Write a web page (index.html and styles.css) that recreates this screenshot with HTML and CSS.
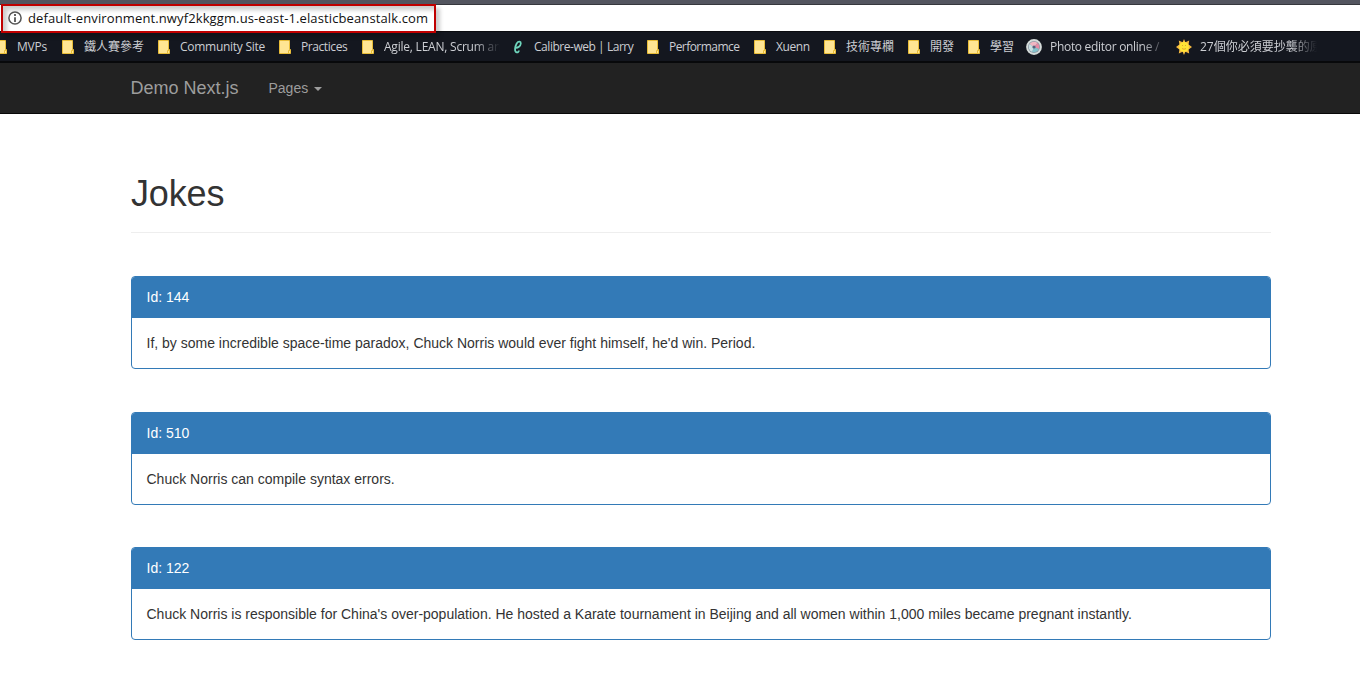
FILE: index.html
```html
<!DOCTYPE html>
<html lang="en">
<head>
<meta charset="utf-8">
<title>Demo Next.js</title>
<link rel="stylesheet" href="styles.css">
</head>
<body>
<svg class="defs" width="0" height="0">
  <symbol id="folder" viewBox="0 0 12 14"><path d="M.5.5h10v9h1v4H.5z" fill="#ffe593" stroke="#e9bd38"/><path d="M9.5 13V10.500h1.500" fill="none" stroke="#e9bd38"/></symbol>
</svg>
<div class="strip"></div>
<div class="address">
  <div class="address-box">
    <svg class="info" viewBox="0 0 14 14"><circle cx="7" cy="7" r="6.100" fill="none" stroke="#555" stroke-width="1.500"/><path d="M7 3v2M7 6.200v4.800" stroke="#555" stroke-width="1.800"/></svg>
    <span class="url">default-environment.nwyf2kkggm.us-east-1.elasticbeanstalk.com</span>
  </div>
</div>
<div class="bookmarks">
  <div class="bm"><svg class="folder"><use href="#folder"/></svg><span class="t-mvps">MVPs</span></div>
  <div class="bm"><svg class="folder"><use href="#folder"/></svg><span>鐵人賽參考</span></div>
  <div class="bm"><svg class="folder"><use href="#folder"/></svg><span class="t-community">Community Site</span></div>
  <div class="bm"><svg class="folder"><use href="#folder"/></svg><span class="t-practices">Practices</span></div>
  <div class="bm"><svg class="folder"><use href="#folder"/></svg><span class="t-agile fade">Agile, LEAN, Scrum an</span></div>
  <div class="bm"><svg class="folder" viewBox="0 0 12 16"><path d="M2.500 8.800C6 9.500 9 7 9.200 4 9.400 1.500 6.500.8 4.500 4 2.500 7.500 1.500 13.500 4.500 14.200 6 14.500 7 13 7 12" fill="none" stroke="#6fd6bd" stroke-width="2"/></svg><span class="t-calibre">Calibre-web | Larry</span></div>
  <div class="bm"><svg class="folder"><use href="#folder"/></svg><span class="t-perf">Performamce</span></div>
  <div class="bm"><svg class="folder"><use href="#folder"/></svg><span class="t-xuenn">Xuenn</span></div>
  <div class="bm"><svg class="folder"><use href="#folder"/></svg><span>技術專欄</span></div>
  <div class="bm"><svg class="folder"><use href="#folder"/></svg><span>開發</span></div>
  <div class="bm"><svg class="folder"><use href="#folder"/></svg><span>學習</span></div>
  <div class="bm"><svg class="fav" viewBox="0 0 16 16"><circle cx="8" cy="8" r="7.900" fill="#d5dcda"/><circle cx="8" cy="8" r="6" fill="#8d98a5"/><path d="M8 8 3.500 5A5.400 5.400 0 0 1 11.500 4z" fill="#f0b6c2"/><path d="M8 8l3.500-4a5.400 5.400 0 0 1 1.300 6z" fill="#e58ba4"/><path d="M8 8l4.800 2a5.400 5.400 0 0 1-6.800 2.800z" fill="#84c3cd"/><path d="M8 8l-2 4.800A5.400 5.400 0 0 1 3.500 5z" fill="#c8dfe2"/><circle cx="8" cy="8" r="1.600" fill="#54647c"/></svg><span class="t-photo fade">Photo editor online /</span></div>
  <div class="bm"><svg class="fav" viewBox="0 0 16 16"><path d="M8 0l1.400 3.200L13.200 1.500 12.600 5.500 16 8l-3.400 2.500.6 4-3.800-1.700L8 16l-1.400-3.200-3.800 1.700.6-4L0 8l3.400-2.500-.6-4 3.800 1.700z" fill="#f5b942"/><circle cx="8" cy="8" r="4.900" fill="#ffe536"/><path d="M6 6.500h1M9 6.500h1M6 9.500q2 1.500 4 0" stroke="#dc982a" fill="none" stroke-width=".8"/></svg><span class="t-copy fade">27個你必須要抄襲的原</span></div>
</div>
<nav class="navbar">
  <a class="brand">Demo Next.js</a>
  <a class="nav-link">Pages <i class="caret"></i></a>
</nav>
<main class="container">
  <h1 class="page-header">Jokes</h1>
  <section class="panel"><div class="panel-heading">Id: 144</div><div class="panel-body">If, by some incredible space-time paradox, Chuck Norris would ever fight himself, he'd win. Period.</div></section>
  <section class="panel"><div class="panel-heading">Id: 510</div><div class="panel-body">Chuck Norris can compile syntax errors.</div></section>
  <section class="panel"><div class="panel-heading">Id: 122</div><div class="panel-body">Chuck Norris is responsible for China's over-population. He hosted a Karate tournament in Beijing and all women within 1,000 miles became pregnant instantly.</div></section>
</main>
</body>
</html>
```
FILE: styles.css
```css
* { box-sizing: border-box; }
body { margin: 0; height: 674px; overflow: hidden; background: #fff; color: #333; font: 14px/20px "Liberation Sans", Arial, sans-serif; }
.defs { display: block; }
.strip { height: 5px; background: #53555f; border-bottom: 1px solid #36373d; }
.address { height: 26px; background: #fff; }
.address-box { position: relative; top: -1px; margin-left: 1px; width: 435px; height: 29px; border: 2px solid #c00000; display: flex; align-items: center; padding: 0 0 2px 5px; background: #fff; box-shadow: 4px 4px 4px rgba(0,0,0,.2), inset 4px 4px 4px rgba(0,0,0,.2); z-index: 1; }
.info { width: 14px; height: 14px; flex: none; margin-top: 1px; }
.url { margin-left: 6px; color: #111; font: 13px/20px "Open Sans", "Noto Sans", sans-serif; letter-spacing: .117px; white-space: nowrap; }
.bookmarks { height: 32px; background: #14171f; border-bottom: 2px solid #08090b; border-top: 1px solid #0b0c10; display: grid; grid-template-columns: 67px 96px 121px 83px 150px 135px 107px 70px 84px 60px 58px 150px 140px; overflow: hidden; color: #ccced3; font: 12px/20px "Open Sans", "Noto Sans CJK TC", sans-serif; }
.bm { margin-left: -5px; display: flex; align-items: center; white-space: nowrap; padding-top: 1px; }
.folder { width: 12px; height: 14px; flex: none; margin-right: 10px; }
.fav { width: 16px; height: 16px; flex: none; margin-right: 8px; }
.fade { overflow: hidden; -webkit-mask-image: linear-gradient(to right, #000 calc(100% - 26px), transparent); mask-image: linear-gradient(to right, #000 calc(100% - 26px), transparent); }
.t-mvps { letter-spacing: -.25px; }
.t-community { letter-spacing: -.27px; }
.t-practices { letter-spacing: -.42px; }
.t-agile { width: 116px; letter-spacing: -.22px; }
.t-calibre { letter-spacing: -.46px; }
.t-perf { letter-spacing: -.55px; }
.t-xuenn { letter-spacing: -.4px; }
.t-photo { width: 118px; letter-spacing: -.3px; }
.t-copy { width: 117px; }
.navbar { height: 51px; background: #222; border-bottom: 1px solid #080808; display: flex; align-items: center; padding-left: 130.500px; color: #9d9d9d; }
.brand { font-size: 18px; width: 138px; }
.nav-link { font-size: 14px; display: flex; align-items: center; }
.caret { margin-left: 6px; margin-top: 2px; border: 4px solid transparent; border-top-color: #9d9d9d; border-bottom: 0; }
.container { width: 1140px; margin-left: 131px; padding-top: 60px; }
.page-header { margin: 0 0 43px; height: 59px; border-bottom: 1px solid #eee; font-size: 36px; line-height: 40px; font-weight: 400; letter-spacing: -.15px; }
.panel { height: 93px; margin-bottom: 42.500px; border: 1px solid #337ab7; border-radius: 4px; overflow: hidden; }
.panel-heading { height: 41px; padding: 10px 14.500px; background: #337ab7; color: #fff; }
.panel-body { padding: 15px 14.500px; }
```
